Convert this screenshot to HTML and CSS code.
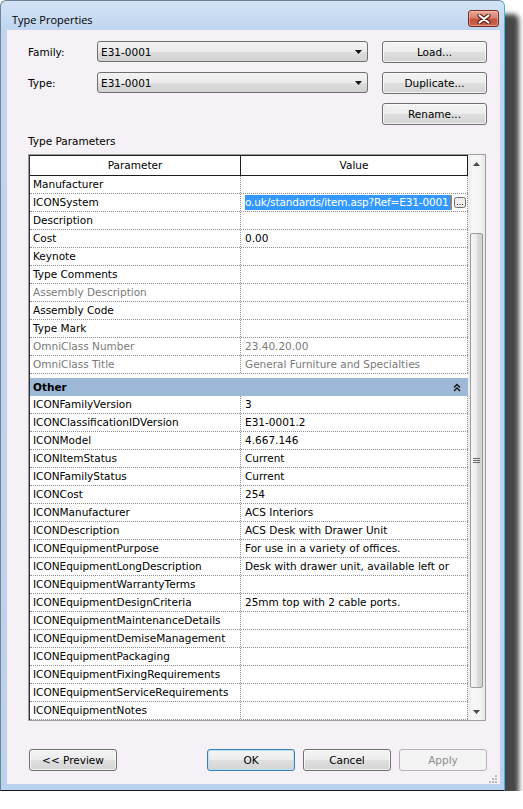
FILE: index.html
```html
<!DOCTYPE html>
<html lang="en">
<head>
    <meta charset="UTF-8">
    <title>Type Properties</title>
    <link rel="stylesheet" href="styles.css">
</head>
<body>
    <div class="window">
        <div class="titlebar">
            <span class="title">Type Properties</span>
            <button class="close" title="Close">
                <svg width="14" height="10" viewBox="0 0 14 10">
                    <path d="M2.5 1.5 L11.5 8.5 M11.5 1.5 L2.5 8.5" stroke="#5b1a12" stroke-width="4.2" stroke-linecap="round"/>
                    <path d="M2.5 1.5 L11.5 8.5 M11.5 1.5 L2.5 8.5" stroke="#fff" stroke-width="2.2" stroke-linecap="round"/>
                </svg>
            </button>
        </div>

        <div class="client">
            <div class="type-form">
                <label class="label">Family:</label>
                <div class="combo">
                    <span>E31-0001</span>
                    <svg class="arrow" width="7" height="4" viewBox="0 0 7 4"><path d="M0 0 H7 L3.5 4 Z" fill="#111"/></svg>
                </div>
                <button class="btn">Load...</button>

                <label class="label">Type:</label>
                <div class="combo">
                    <span>E31-0001</span>
                    <svg class="arrow" width="7" height="4" viewBox="0 0 7 4"><path d="M0 0 H7 L3.5 4 Z" fill="#111"/></svg>
                </div>
                <button class="btn">Duplicate...</button>

                <button class="btn rename">Rename...</button>
            </div>

            <div class="section-label">Type Parameters</div>

            <div class="grid">
                <div class="props">
                    <div class="head">
                        <div class="cell param">Parameter</div>
                        <div class="cell value">Value</div>
                    </div>

                    <div class="row"><div class="param">Manufacturer</div><div class="value"></div></div>
                    <div class="row">
                        <div class="param">ICONSystem</div>
                        <div class="value editing">
                            <span class="edit">o.uk/standards/item.asp?Ref=E31-0001</span>
                            <span class="dots">
                                <svg width="12" height="11" viewBox="0 0 12 11">
                                    <rect x="0.5" y="0.5" width="11" height="10" rx="2" fill="#ececec" stroke="#6f6f6f"/>
                                    <rect x="3" y="7" width="1" height="1" fill="#222"/>
                                    <rect x="5.5" y="7" width="1" height="1" fill="#222"/>
                                    <rect x="8" y="7" width="1" height="1" fill="#222"/>
                                </svg>
                            </span>
                        </div>
                    </div>
                    <div class="row"><div class="param">Description</div><div class="value"></div></div>
                    <div class="row"><div class="param">Cost</div><div class="value">0.00</div></div>
                    <div class="row"><div class="param">Keynote</div><div class="value"></div></div>
                    <div class="row"><div class="param">Type Comments</div><div class="value"></div></div>
                    <div class="row dim"><div class="param">Assembly Description</div><div class="value"></div></div>
                    <div class="row"><div class="param">Assembly Code</div><div class="value"></div></div>
                    <div class="row"><div class="param">Type Mark</div><div class="value"></div></div>
                    <div class="row dim"><div class="param">OmniClass Number</div><div class="value">23.40.20.00</div></div>
                    <div class="row dim"><div class="param">OmniClass Title</div><div class="value">General Furniture and Specialties</div></div>

                    <div class="group">
                        <span>Other</span>
                        <svg width="8" height="9" viewBox="0 0 8 9"><path d="M1 4.5 L4 1.5 L7 4.5 M1 8 L4 5 L7 8" fill="none" stroke="#111" stroke-width="1.4"/></svg>
                    </div>

                    <div class="row"><div class="param">ICONFamilyVersion</div><div class="value">3</div></div>
                    <div class="row"><div class="param">ICONClassificationIDVersion</div><div class="value">E31-0001.2</div></div>
                    <div class="row"><div class="param">ICONModel</div><div class="value">4.667.146</div></div>
                    <div class="row"><div class="param">ICONItemStatus</div><div class="value">Current</div></div>
                    <div class="row"><div class="param">ICONFamilyStatus</div><div class="value">Current</div></div>
                    <div class="row"><div class="param">ICONCost</div><div class="value">254</div></div>
                    <div class="row"><div class="param">ICONManufacturer</div><div class="value">ACS Interiors</div></div>
                    <div class="row"><div class="param">ICONDescription</div><div class="value">ACS Desk with Drawer Unit</div></div>
                    <div class="row"><div class="param">ICONEquipmentPurpose</div><div class="value">For use in a variety of offices.</div></div>
                    <div class="row"><div class="param">ICONEquipmentLongDescription</div><div class="value">Desk with drawer unit, available left or</div></div>
                    <div class="row"><div class="param">ICONEquipmentWarrantyTerms</div><div class="value"></div></div>
                    <div class="row"><div class="param">ICONEquipmentDesignCriteria</div><div class="value">25mm top with 2 cable ports.</div></div>
                    <div class="row"><div class="param">ICONEquipmentMaintenanceDetails</div><div class="value"></div></div>
                    <div class="row"><div class="param">ICONEquipmentDemiseManagement</div><div class="value"></div></div>
                    <div class="row"><div class="param">ICONEquipmentPackaging</div><div class="value"></div></div>
                    <div class="row"><div class="param">ICONEquipmentFixingRequirements</div><div class="value"></div></div>
                    <div class="row"><div class="param">ICONEquipmentServiceRequirements</div><div class="value"></div></div>
                    <div class="row last"><div class="param">ICONEquipmentNotes</div><div class="value"></div></div>
                </div>

                <div class="scrollbar">
                    <div class="sb-btn">
                        <svg width="7" height="4" viewBox="0 0 7 4"><path d="M3.5 0 L7 4 H0 Z" fill="#4a4a4a"/></svg>
                    </div>
                    <div class="thumb">
                        <svg width="7" height="6" viewBox="0 0 7 6"><path d="M0 0.5 H7 M0 2.5 H7 M0 4.5 H7" stroke="#6a6a6a" stroke-width="1"/></svg>
                    </div>
                    <div class="sb-btn down">
                        <svg width="7" height="4" viewBox="0 0 7 4"><path d="M0 0 H7 L3.5 4 Z" fill="#4a4a4a"/></svg>
                    </div>
                </div>
            </div>

            <div class="footer">
                <button class="btn">&lt;&lt; Preview</button>
                <div class="actions">
                    <button class="btn default">OK</button>
                    <button class="btn">Cancel</button>
                    <button class="btn" disabled>Apply</button>
                </div>
            </div>

            <svg class="grip" width="8" height="8" viewBox="0 0 8 8">
                <rect x="6" y="0" width="2" height="2" fill="#b9b9b9"/>
                <rect x="3" y="3" width="2" height="2" fill="#b9b9b9"/>
                <rect x="6" y="3" width="2" height="2" fill="#b9b9b9"/>
                <rect x="0" y="6" width="2" height="2" fill="#b9b9b9"/>
                <rect x="3" y="6" width="2" height="2" fill="#b9b9b9"/>
                <rect x="6" y="6" width="2" height="2" fill="#b9b9b9"/>
            </svg>
        </div>
    </div>
</body>
</html>
```

FILE: styles.css
```css
* { box-sizing: border-box; }

body {
    margin: 0;
    background: #fff;
    font-family: "DejaVu Sans", sans-serif;
    font-size: 10.5px;
    color: #000;
}

.window {
    width: 505px;
    height: 791px;
    display: flex;
    flex-direction: column;
    background: linear-gradient(#d3e3f6 0, #c0d5ef 28px, #bbd2ee 100%);
    border: 1px solid #6f8299;
    border-right-color: #38b9ec;
    border-bottom-color: #151515;
    border-radius: 6px 6px 0 0;
    box-shadow: 14px 14px 5px rgba(25, 25, 25, 0.8);
}

/* title bar */
.titlebar {
    height: 29px;
    display: flex;
    align-items: flex-start;
    justify-content: space-between;
}

.title {
    font-family: "Open Sans", sans-serif;
    font-size: 11px;
    line-height: 16px;
    margin: 11px 0 0 11px;
}

.close {
    width: 31px;
    height: 17px;
    margin: 9px 5px 0 0;
    padding: 0;
    display: flex;
    align-items: center;
    justify-content: center;
    border: 1px solid #7a2a1f;
    border-radius: 3px;
    background: linear-gradient(#e9a898 0%, #d7826f 45%, #c4523c 55%, #c9664e 100%);
    box-shadow: inset 0 0 0 1px rgba(255, 210, 200, 0.45);
}

/* client area */
.client {
    width: 493px;
    height: 754px;
    margin-left: 6px;
    padding: 11px 13px 0 21px;
    display: flex;
    flex-direction: column;
    background: #f5f1f6;
}

.type-form {
    display: grid;
    grid-template-columns: 55px 271px 105px;
    grid-auto-rows: 22px;
    column-gap: 14px;
    row-gap: 9px;
    align-items: center;
}

.label { line-height: 13px; }

.combo {
    height: 21px;
    align-self: start;
    display: flex;
    align-items: center;
    justify-content: space-between;
    padding: 0 5px 0 3px;
    border: 1px solid #707070;
    border-radius: 3px;
    background: linear-gradient(#f3f3f3 0%, #ebebeb 50%, #dddddd 51%, #d2d2d2 100%);
}

.btn {
    height: 22px;
    padding: 0;
    font-family: inherit;
    font-size: inherit;
    color: #000;
    border: 1px solid #707070;
    border-radius: 3px;
    background: linear-gradient(#f4f4f4 0%, #ececec 50%, #dfdfdf 51%, #d4d4d4 100%);
    box-shadow: inset 0 0 0 1px rgba(255, 255, 255, 0.7);
}

.btn.rename { grid-column: 3; }

.btn.default {
    border-color: #3c7fb1;
    box-shadow: inset 0 0 0 1px #b9e2f7;
}

.btn:disabled {
    color: #8d8d8d;
    border-color: #b5b3b6;
    background: #f4f4f4;
    box-shadow: none;
}

.section-label {
    margin-top: 10px;
    line-height: 13px;
}

/* parameter grid */
.grid {
    width: 458px;
    height: 567px;
    margin-top: 6px;
    display: flex;
    border: 1px solid #9d9d9d;
    background: #fff;
}

.props {
    width: 439px;
    border-left: 1px solid #333;
    overflow: hidden;
}

.head {
    display: flex;
    height: 21px;
}

.head .cell {
    border: 1px solid #1c1c1c;
    text-align: center;
    line-height: 19px;
}

.head .param { width: 211px; border-left: none; }
.head .value { width: 227px; border-left: none; }

.row {
    display: flex;
    height: 18px;
    line-height: 17px;
    border-bottom: 1px dotted #8f8f8f;
}

.row .param,
.row .value {
    padding-left: 3px;
    white-space: nowrap;
    overflow: hidden;
}

.row .param {
    width: 211px;
    border-right: 1px dotted #8f8f8f;
}

.row .value {
    width: 227px;
    border-right: 1px dotted #8f8f8f;
    padding-left: 4px;
}

.row.dim { color: #7a7a7a; }

.value.editing {
    display: flex;
    align-items: center;
}

.edit {
    width: 207px;
    height: 15px;
    line-height: 15px;
    overflow: hidden;
    white-space: nowrap;
    letter-spacing: -0.15px;
    color: #fff;
    background: #3399ff;
    border-right: 1px solid #e07a10;
}

.dots {
    display: flex;
    margin-left: 2px;
}

.group {
    height: 18px;
    margin-top: 4px;
    display: flex;
    align-items: center;
    justify-content: space-between;
    padding: 0 7px 0 3px;
    font-weight: bold;
    background: #9eb9d8;
}

/* scrollbar */
.scrollbar {
    width: 17px;
    display: flex;
    flex-direction: column;
    background: linear-gradient(90deg, #e9e9e9 0%, #f7f7f7 25%, #f4f4f4 75%, #e6e6e6 100%);
}

.sb-btn {
    height: 17px;
    display: flex;
    align-items: center;
    justify-content: center;
}

.sb-btn.down { margin-top: auto; }

.thumb {
    height: 455px;
    margin: 61px 2px 0 2px;
    display: flex;
    align-items: center;
    justify-content: center;
    border: 1px solid #9a9a9a;
    border-radius: 2px;
    background: linear-gradient(90deg, #f6f6f6 0%, #ececec 50%, #dcdcdc 51%, #d0d0d0 100%);
}

/* footer */
.footer {
    margin-top: 28px;
    display: flex;
    justify-content: space-between;
}

.footer .btn { width: 88px; }
.footer > .btn { margin-left: 1px; }

.actions {
    display: flex;
    gap: 8px;
}

.grip {
    align-self: flex-end;
    margin: 4px -10px 0 0;
}
```
